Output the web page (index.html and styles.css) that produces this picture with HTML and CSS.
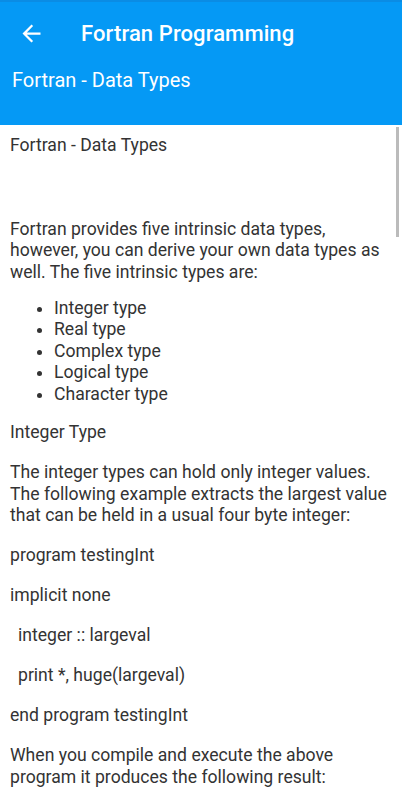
FILE: index.html
```html
<!DOCTYPE html>
<html>
<head>
<meta charset="utf-8">
<link rel="stylesheet" href="styles.css">
</head>
<body>
<div class="app">
  <header class="appbar">
    <div class="appbar-row">
      <button class="back" aria-label="Back">
        <svg width="27" height="27" viewBox="0 0 24 24"><path d="M20 11H7.83l5.59-5.59L12 4l-8 8 8 8 1.41-1.41L7.83 13H20v-2z" fill="#fff"/></svg>
      </button>
      <h1 class="title">Fortran Programming</h1>
    </div>
    <h2 class="subtitle">Fortran - Data Types</h2>
  </header>
  <main class="content">
    <p class="lead">Fortran - Data Types</p>
    <p>Fortran provides five intrinsic data types, however, you can derive your own data types as well. The five intrinsic types are:</p>
    <ul class="list">
      <li>Integer type</li>
      <li>Real type</li>
      <li>Complex type</li>
      <li>Logical type</li>
      <li>Character type</li>
    </ul>
    <p>Integer Type</p>
    <p>The integer types can hold only integer values. The following example extracts the largest value that can be held in a usual four byte integer:</p>
    <p>program testingInt</p>
    <p>implicit none</p>
    <p class="indent">integer :: largeval</p>
    <p class="indent">print *, huge(largeval)</p>
    <p>end program testingInt</p>
    <p>When you compile and execute the above program it produces the following result:</p>
  </main>
  <div class="scrollbar"></div>
</div>
</body>
</html>
```

FILE: styles.css
```css
html, body {
  margin: 0;
  padding: 0;
  background: #fff;
  overflow: hidden;
}
.app {
  position: relative;
  width: 402px;
  height: 800px;
  overflow: hidden;
  font-family: Roboto, "Noto Sans", sans-serif;
}
.appbar {
  background: #0599f5;
  border-top: 2px solid #0a8ce4;
  height: 123px;
  box-sizing: content-box;
  color: #fff;
}
.appbar-row {
  display: flex;
  align-items: center;
  height: 66px;
  margin-top: -2px;
}
.back {
  width: 40px;
  height: 40px;
  margin-left: 11px;
  padding: 0;
  border: 0;
  background: transparent;
  display: flex;
  align-items: center;
  justify-content: center;
}
.title {
  margin: 0 0 0 30px;
  font-size: 22px;
  font-weight: 500;
  letter-spacing: 0.1px;
}
.subtitle {
  margin: 2px 0 0 12px;
  font-size: 20px;
  font-weight: 400;
  line-height: 24px;
}
.content {
  padding: 10px 10px 0 10px;
  color: #333;
  font-size: 17.6px;
  line-height: 21.5px;
}
.content p {
  margin: 0 0 18.5px 0;
}
.content p.lead {
  margin-bottom: 62px;
}
.list {
  margin: -4px 0 17px 0;
  padding-left: 44px;
}
.indent {
  padding-left: 8px;
}
.scrollbar {
  position: absolute;
  right: 3px;
  top: 127px;
  width: 3px;
  height: 110px;
  background: #bbb;
}
```
